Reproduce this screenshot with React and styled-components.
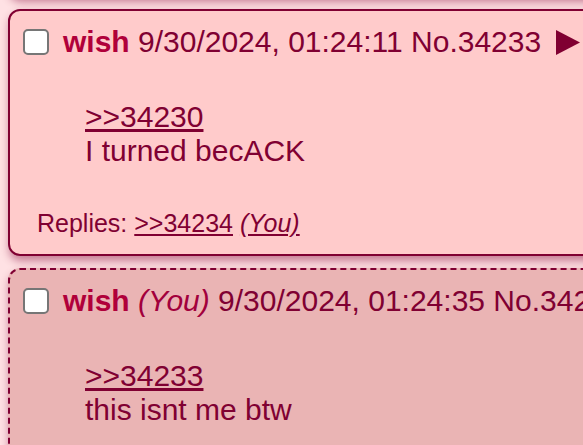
import styled, { createGlobalStyle } from "styled-components"

const GlobalStyle = createGlobalStyle`
  html, body {
    margin: 0;
    padding: 0;
    background: #ffe1e4;
    overflow: hidden;
  }
  body {
    font-family: "Liberation Sans", Arial, sans-serif;
    color: #800032;
  }
`

const Viewport = styled.div`
  height: 445px;
  overflow: hidden;
`

/* page is scrolled a little, the post above is mostly out of view */
const Thread = styled.div`
  margin-top: -59px;
  padding-left: 8px;
  width: 720px;
  display: flex;
  flex-direction: column;
  gap: 12px;
`

const Post = styled.article`
  border: 2px ${props => props.you ? "dashed" : "solid"} #800032;
  border-radius: 12px;
  background: ${props => props.you ? "#eab4b4" : "#ffcbcb"};
  box-shadow: 1px 5px 8px rgba(128, 0, 50, 0.45);
  padding: 14px 0 15px 13px;
  min-height: ${props => props.minHeight || 0}px;
  box-sizing: border-box;
  font-size: 30px;
`

const Header = styled.div`
  display: flex;
  align-items: center;
  gap: 14px;
  white-space: nowrap;
`

const Check = styled.input.attrs({ type: "checkbox" })`
  appearance: none;
  margin: 0;
  width: 26px;
  height: 26px;
  box-sizing: border-box;
  border: 2px solid #767676;
  border-radius: 5px;
  background: #fff;
  flex-shrink: 0;
`

const Info = styled.span`
  display: inline-flex;
  align-items: center;
`

const Name = styled.b`
  color: #b0003a;
`

const You = styled.i`
  color: #a2003c;
`

const Arrow = styled.svg`
  margin-left: 15px;
  width: 24px;
  height: 25px;
  fill: #800032;
`

const Body = styled.blockquote`
  margin: 41px 0 0 62px;
  line-height: normal;
`

const Quote = styled.a`
  color: #800032;
  text-decoration: underline;
  display: block;
`

const Replies = styled.div`
  margin: 41px 0 0 14px;
  font-size: 25px;
  a {
    color: #800032;
    text-decoration: underline;
  }
`

const Text = ({ children }) => <span>{children}</span>

export default function App() {
  return (
    <>
      <GlobalStyle />
      <Viewport>
        <Thread>
          <Post minHeight={56} />
          <Post minHeight={247}>
            <Header>
              <Check />
              <Info>
                <Name>wish</Name>&nbsp;<Text>9/30/2024, 01:24:11 No.34233</Text>
                <Arrow viewBox="0 0 24 25"><polygon points="0,0 24,12.5 0,25" /></Arrow>
              </Info>
            </Header>
            <Body>
              <Quote>&gt;&gt;34230</Quote>
              I turned becACK
            </Body>
            <Replies>
              Replies: <a>&gt;&gt;34234</a> <a><i>(You)</i></a>
            </Replies>
          </Post>
          <Post you minHeight={260}>
            <Header>
              <Check />
              <Info>
                <Name>wish</Name>&nbsp;<You>(You)</You>&nbsp;<Text>9/30/2024, 01:24:35 No.34234</Text>
              </Info>
            </Header>
            <Body>
              <Quote>&gt;&gt;34233</Quote>
              this isnt me btw
            </Body>
          </Post>
        </Thread>
      </Viewport>
    </>
  )
}
